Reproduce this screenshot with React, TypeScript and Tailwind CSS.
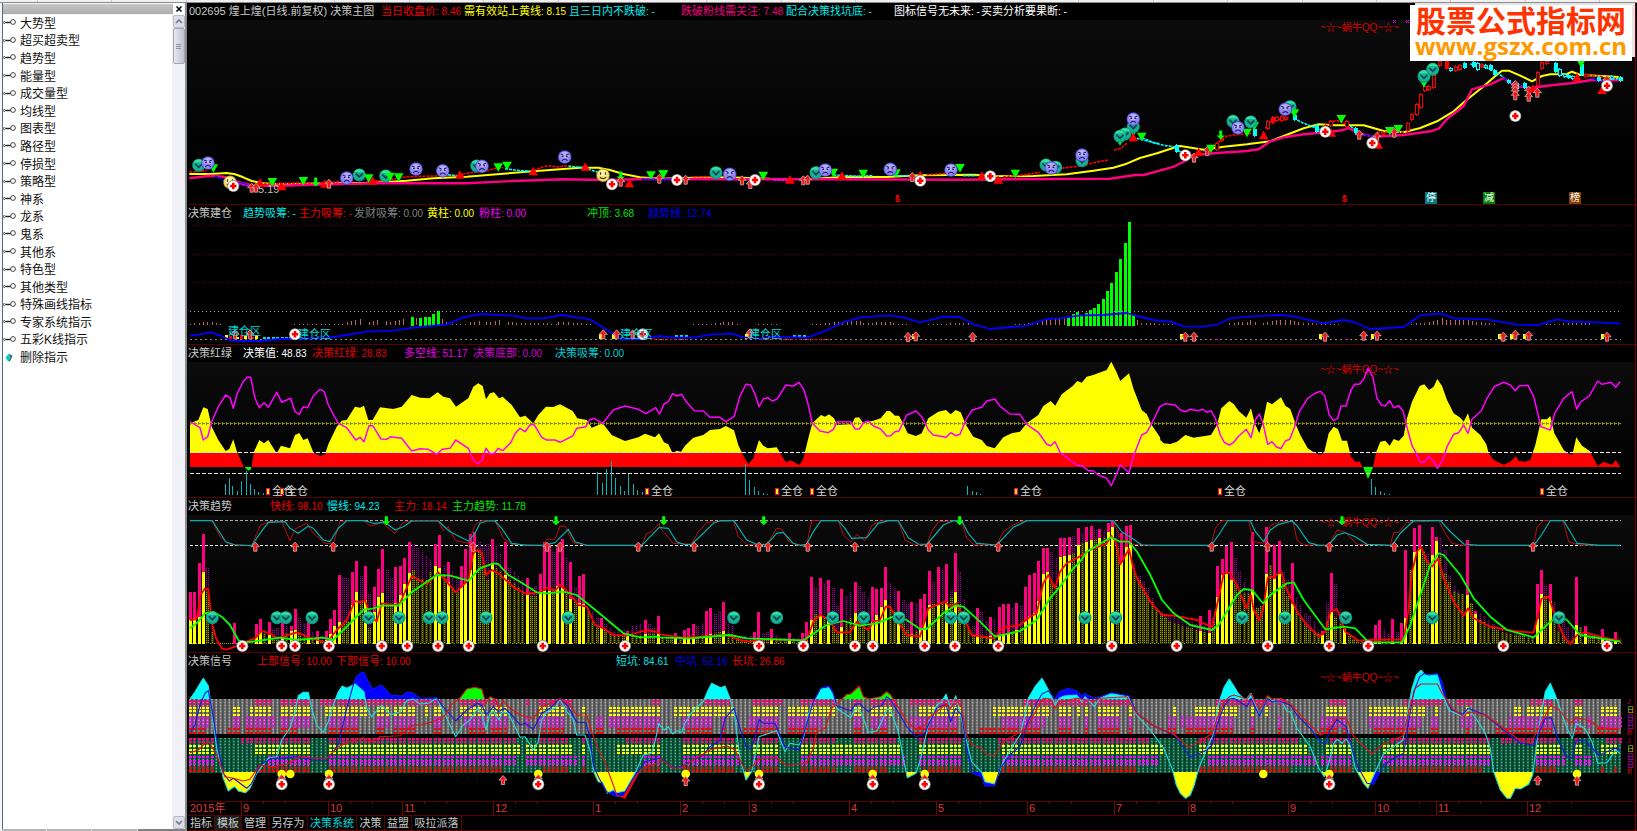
import { ReactNode } from "react";

// Curves are stored as three windows, each at three units to the pixel
type Trace = [string, string, string];

const WINDOW_X = [180, 660, 1137];

const TOP = { price: 0, build: 205, band: 205, trend: 495, signal: 495 };

const points = (trace: Trace, oy: number): [number, number][] => {
  const result: [number, number][] = [];
  trace.forEach((part, i) => {
    part.split(" ").forEach((pair) => {
      if (!pair) return;
      const [x, y] = pair.split(",").map(Number);
      const px = WINDOW_X[i] + x / 3;
      const last = result[result.length - 1];
      if (last && px <= last[0]) return;
      result.push([px, oy + y / 3]);
    });
  });
  return result;
};

const linePath = (pts: [number, number][]) =>
  "M" + pts.map(([x, y]) => `${x.toFixed(1)},${y.toFixed(1)}`).join("L");

const areaPath = (pts: [number, number][], base: number) =>
  `${linePath(pts)}L${pts[pts.length - 1][0]},${base}L${pts[0][0]},${base}Z`;

const valueAt = (pts: [number, number][], x: number) => {
  const i = pts.findIndex((p) => p[0] >= x);
  if (i <= 0) return i === 0 ? pts[0][1] : pts[pts.length - 1][1];
  const [x0, y0] = pts[i - 1];
  const [x1, y1] = pts[i];
  return y0 + ((y1 - y0) * (x - x0)) / (x1 - x0);
};

const PITCH = 4.372;
const FIRST = 190;
const COLUMNS = Array.from({ length: 328 }, (_, i) => FIRST + i * PITCH);

/* ---------------------------------------------------------------- price */

const priceYellow: Trace = [
  "28,522 90,522 140,519 165,523 190,532 215,543 250,550 300,553 440,550 580,548 680,542 760,535 860,530 960,522 1060,514 1150,507 1200,503 1255,503 1290,510 1330,522 1380,532 1440,536",
  "100,533 200,532 330,536 450,537 560,530 680,531 780,526 940,524 1000,529 1120,528 1220,523 1300,512 1360,503 1400,491 1440,474",
  "0,478 60,460 110,443 130,438 200,449 260,440 330,433 400,424 440,408 500,385 545,373 590,376 680,376 740,393 800,397 850,384 900,364 950,334 985,303 1040,259 1075,228 1095,212 1115,212 1150,227 1185,244 1215,228 1240,223 1290,222 1305,215 1330,225 1380,227 1445,231",
];
const pricePink: Trace = [
  "28,535 90,527 130,530 170,545 220,557 300,557 440,553 600,550 860,550 1000,543 1150,538 1280,540 1400,537",
  "0,537 200,538 500,538 900,539 1200,537 1350,536 1400,529 1425,525",
  "0,525 20,525 60,514 110,500 150,480 165,466 240,459 330,453 365,448 400,424 440,412 500,403 570,397 620,390 635,384 665,400 710,410 800,405 880,394 905,386 930,357 980,318 1005,268 1060,253 1100,234 1130,255 1180,265 1230,257 1300,250 1370,239 1400,242 1450,240",
];

// [window, colour, points]
const priceRuns: [number, string, string][] = [
  [0, "#f00", "28,516 80,512"],
  [0, "#00f", "105,528 130,540 160,550 185,548 210,557"],
  [0, "#f0f", "150,545 170,550 215,560"],
  [0, "#f00", "240,553 350,549 440,548 480,545"],
  [0, "#f00", "560,545 620,540 680,530 760,528 830,526 870,518 920,512 950,504 970,503"],
  [0, "#0ff", "780,522 830,527"],
  [0, "#0ff", "975,506 1010,511 1050,514"],
  [0, "#f00", "1060,512 1090,500 1110,497 1130,501 1165,497"],
  [0, "#0ff", "1165,498 1210,503 1240,512 1262,520"],
  [0, "#00f", "1385,538 1440,540 1490,537"],
  [1, "#f00", "100,530 160,530"],
  [1, "#f0f", "340,539 390,543"],
  [1, "#0ff", "520,525 590,529 640,527"],
  [1, "#0ff", "700,527 760,527"],
  [1, "#f00", "800,524 870,520"],
  [1, "#0ff", "910,527 950,527"],
  [1, "#f00", "1030,530 1090,525 1140,517"],
  [1, "#f00", "1205,505 1240,500 1270,497 1300,488 1345,480"],
  [1, "#f00", "1362,450 1380,446 1395,435 1402,426"],
  [1, "#0ff", "1430,415 1470,425 1500,432"],
  [2, "#0ff", "15,413 50,428 80,436 110,440 135,460"],
  [2, "#f00", "225,440 250,422 270,408 310,403 350,400"],
  [2, "#f00", "385,385 400,366 430,358 455,352"],
  [2, "#0ff", "470,355 500,370 540,385 560,392"],
  [2, "#f00", "575,365 600,362 630,372"],
  [2, "#0ff", "630,372 665,395"],
  [2, "#00f", "650,392 680,404 715,410"],
  [2, "#f00", "720,397 800,397"],
  [2, "#0ff", "1000,192 1040,200 1075,215 1100,232"],
  [2, "#00f", "1100,235 1140,255 1170,262"],
  [2, "#0ff", "1250,205 1265,218 1290,232 1325,236"],
  [2, "#f00", "1340,225 1400,230"],
  [2, "#00f", "1360,234 1400,245"],
  [2, "#0ff", "1400,238 1450,236"],
];

// x, top, bottom, kind: r hollow red, R solid red, c solid cyan, h hollow cyan
const candles =
  "118 436 458 c|238 430 450 r|252 418 425 r|352 388 408 c|390 362 387 r|405 352 370 R|418 352 365 r|432 348 362 r|445 350 360 r|470 345 360 c|537 375 395 c|565 375 385 r|580 362 378 r|628 362 380 r|655 385 400 c|735 395 405 r|810 370 395 r|823 343 360 r|837 312 345 r|850 283 325 r|862 258 272 r|874 258 270 r|887 225 265 r|905 183 198 r|927 184 208 R|940 205 215 h|953 198 212 r|966 195 210 r|980 188 202 c|1007 186 200 c|1020 190 212 h|1032 192 202 r|1045 196 204 h|1058 196 212 c|1072 210 226 c|1112 240 250 c|1137 250 268 c|1160 250 265 c|1200 215 258 r|1213 185 205 r|1227 183 192 r|1253 188 215 c|1266 208 230 h|1280 222 232 h|1293 226 234 c|1306 228 238 h|1332 192 225 c|1345 222 232 r|1383 232 245 c|1422 228 238 h|1448 230 242 c".split(
    "|"
  );

const priceMarks = [
  "V 56 496|G 100 505|S 84 489|Y 150 547|C 160 558|T 240 548|U 215 563|U 228 563|G 277 546|T 305 559|G 370 543|A 407 546|T 435 551|U 447 551|S 500 534|V 538 525|G 566 535|T 578 542|V 617 528|G 630 530|G 656 532|S 708 507|S 788 512|T 840 524|V 890 498|S 906 499|G 955 502|G 981 497|T 1060 514|S 1154 471|T 1216 500|Y 1269 526|C 1296 553|A 1322 528|U 1322 545|T 1348 550|G 1413 526|U 1438 536|G 1450 523",
  "G 10 523|C 51 540|U 77 539|V 168 518|S 209 523|U 246 541|U 271 552|C 285 540|G 310 527|T 390 539|U 430 541|U 443 539|V 468 518|G 520 518|S 496 510|T 546 527|G 610 521|G 708 520|S 691 508|U 757 531|T 781 526|C 781 542|G 900 504|S 873 510|T 965 527|C 991 529|T 1015 539|G 1066 521|V 1158 495|V 1187 502|S 1174 504|V 1266 482|S 1266 465|G 1420 396|V 1420 380|S 1420 357|V 1395 402|G 1380 424|V 1380 409|G 1445 410|T 1420 412",
  "C 145 466|U 171 473|T 185 456|U 211 453|G 222 446|A 251 405|G 352 378|V 288 364|V 341 366|G 330 398|S 303 383|T 380 406|V 459 320|G 472 340|S 445 328|T 583 398|C 565 395|G 613 357|U 667 404|U 720 410|T 724 434|C 706 429|G 758 393|G 784 387|U 772 398|G 861 250|V 861 229|V 887 208|U 1135 255|U 1135 264|U 1135 273|U 1135 286|U 1175 272|U 1175 290|T 1188 266|U 1201 278|C 1135 348|T 1320 232|G 1332 190|T 1395 270|U 1410 240|C 1410 257",
];

/* ---------------------------------------------------------------- build */

const buildLine: Trace = [
  "30,392 60,388 92,382 120,391 145,403 170,408 240,408 300,402 440,399 500,390 560,380 640,377 700,368 800,358 850,337 900,327 1000,332 1040,340 1090,340 1145,330 1230,343 1270,368 1300,386 1325,403 1380,403 1440,393",
  "0,393 40,398 100,398 150,389 215,386 250,397 300,401 340,396 440,398 490,380 550,352 600,337 690,331 730,337 780,352 850,335 900,336 940,358 990,372 1100,362 1160,342 1200,340 1260,331 1330,330 1400,324 1430,333",
  "50,345 100,350 140,364 200,365 240,359 280,340 330,335 430,330 470,334 560,355 620,345 650,351 700,372 800,366 850,331 910,325 950,340 1050,343 1140,359 1200,361 1260,343 1300,350 1380,352 1450,356",
];

// window, from, to, height at each end
const buildTicks: number[][] = [
  [0, 30, 70, 4, 8], [0, 82, 125, 10, 3], [0, 343, 490, 3, 4], [0, 500, 552, 8, 18],
  [0, 566, 605, 9, 16], [0, 618, 640, 12, 8], [0, 644, 683, 12, 18], [0, 708, 708, 20, 20],
  [0, 785, 800, 18, 10], [0, 815, 865, 4, 4], [0, 870, 905, 8, 12], [0, 918, 970, 8, 15],
  [0, 983, 1130, 8, 4], [0, 1135, 1160, 10, 10], [0, 1165, 1240, 8, 3],
  [1, 100, 180, 3, 5], [1, 190, 225, 8, 8], [1, 232, 245, 3, 3], [1, 295, 350, 3, 3],
  [1, 455, 490, 3, 3], [1, 495, 600, 6, 12], [1, 610, 690, 6, 9], [1, 700, 745, 5, 3],
  [1, 805, 930, 4, 5], [1, 1065, 1140, 3, 6], [1, 1145, 1215, 12, 20], [1, 1431, 1431, 16, 16],
  [2, 13, 110, 6, 3], [2, 277, 330, 5, 10], [2, 340, 342, 15, 15], [2, 353, 366, 8, 5],
  [2, 378, 432, 7, 16], [2, 445, 500, 16, 6], [2, 512, 610, 5, 3], [2, 810, 870, 3, 6],
  [2, 875, 915, 8, 20], [2, 927, 995, 14, 16], [2, 1005, 1080, 12, 3], [2, 1200, 1365, 4, 5],
];

const greenBars = [
  "695,336 721,338 734,337 747,335 760,328 773,318",
  "1225,338 1238,328 1251,320 1264,330 1277,325 1289,315 1301,309 1315,296 1328,281 1341,259 1354,233 1367,201 1381,162 1394,114 1407,51 1420,330",
];

const buildMarks = [
  "U 165 388|U 210 388|C 345 388|U 1270 388|U 1310 388|U 1358 388|C 1388 388",
  "U 270 385|U 744 396|U 767 394|U 938 396",
  "U 145 395|U 171 395|U 564 395|U 680 392|U 720 392|U 1099 395|U 1135 389|U 1175 392|U 1410 395",
];

/* ----------------------------------------------------------------- band */

const bandArea: Trace = [
  "30,655 55,645 70,607 83,612 95,665 115,705 137,738 148,732 160,703 170,738 190,782 205,797 213,793 222,740 238,705 252,715 265,705 290,745 303,722 330,730 345,690 358,684 370,705 383,700 400,742 420,753 435,748 445,718 470,665 485,647 500,645 525,605 540,608 552,602 565,645 578,645 600,607 640,612 665,605 695,570 720,578 748,580 773,562 790,575 810,580 828,605 865,580 880,545 895,535 908,543 918,583 930,565 942,562 957,580 968,575 995,600 1020,637 1036,632 1060,655 1075,630 1098,605 1120,606 1140,598 1178,618 1192,640 1220,645 1235,668 1268,655 1295,690 1335,708 1375,697 1395,686 1425,697 1437,685",
  "0,690 12,712 25,718 38,745 50,737 63,740 75,722 100,698 130,690 150,675 180,672 197,663 222,676 235,720 250,752 265,777 280,760 297,705 310,722 323,730 350,727 365,752 378,772 392,766 418,780 430,762 445,700 457,655 483,630 495,635 507,628 522,640 532,660 575,657 585,638 597,637 610,655 623,650 640,647 662,640 680,618 690,618 705,632 717,632 730,657 743,685 768,693 785,685 805,640 835,620 858,615 872,628 887,615 902,622 918,660 940,695 965,705 980,723 1004,730 1030,697 1055,685 1080,680 1100,655 1135,630 1150,603 1172,588 1186,602 1205,568 1238,543 1252,528 1265,533 1280,515 1300,510 1340,495 1354,470 1368,498 1381,528 1407,505 1420,550 1445,615 1460,627 1475,660 1500,697",
  "70,705 80,715 100,717 120,710 145,690 170,698 222,690 240,660 253,610 277,588 290,597 305,618 328,638 342,610 353,655 367,685 378,650 390,590 405,598 432,577 445,602 460,612 475,655 490,690 512,730 530,742 550,750 562,740 575,685 590,665 603,673 615,707 630,707 642,755 655,770 668,770 680,790 693,822 707,790 718,740 730,710 745,707 758,722 770,702 785,708 800,692 810,640 825,590 848,543 862,538 876,555 890,545 901,522 915,543 930,585 950,625 970,638 980,650 993,625 1005,668 1030,690 1048,718 1055,745 1070,765 1100,779 1120,770 1137,753 1145,768 1165,770 1180,765 1195,720 1213,643 1230,643 1240,633 1252,685 1280,735 1295,747 1306,750 1318,697 1335,722 1358,738 1382,783 1400,770 1425,780 1436,765 1450,785",
];
const bandLine: Trace = [
  "30,650 60,668 70,705 83,695 95,650 115,605 137,570 150,578 160,610 172,565 190,530 202,516 212,517 225,580 238,608 252,593 265,607 290,562 305,592 332,580 345,620 358,628 370,605 383,608 400,572 420,553 433,560 445,600 475,655 500,668 527,705 540,697 552,710 567,662 578,662 603,702 620,703 632,695 665,700 695,738 720,731 745,733 770,748 787,733 810,730 827,705 865,730 880,765 893,777 907,765 918,730 930,747 943,745 955,730 968,737 993,712 1006,685 1020,670 1035,680 1050,660 1062,658 1085,697 1100,705 1125,705 1140,712 1178,693 1190,670 1218,665 1228,645 1242,640 1268,655 1300,615 1335,603 1375,613 1398,626 1427,608 1438,627",
  "0,625 12,597 25,590 38,566 50,573 65,568 80,592 103,617 130,618 150,637 180,637 197,650 222,635 240,573 258,538 272,540 285,567 297,605 310,582 323,578 337,588 350,583 378,540 400,543 417,532 432,555 445,600 457,655 480,678 505,683 520,673 532,650 572,650 585,672 598,672 612,652 625,648 640,663 662,672 680,693 692,692 705,680 717,678 740,630 768,618 785,635 805,675 820,690 858,697 872,683 887,692 900,688 920,640 937,615 965,607 980,588 1005,582 1018,602 1050,627 1080,628 1100,658 1135,682 1160,718 1172,722 1185,710 1200,742 1250,780 1265,782 1285,797 1300,797 1315,810 1340,820 1354,842 1381,780 1407,803 1420,755 1445,690 1460,682 1475,655 1500,605",
  "85,596 115,600 130,615 145,620 160,613 183,617 197,613 210,622 222,617 235,640 250,690 262,712 277,720 290,712 303,695 328,673 342,698 355,645 367,627 378,655 392,718 405,710 418,725 432,731 445,708 458,703 473,665 487,620 512,580 530,567 550,559 563,572 577,630 590,647 602,640 612,603 627,603 642,555 653,538 668,537 680,522 693,490 707,515 720,580 733,600 745,603 758,587 770,608 785,602 798,618 812,675 825,722 838,745 850,772 862,772 875,755 888,765 901,790 917,765 930,725 950,688 965,683 980,660 993,685 1005,643 1033,617 1050,580 1072,545 1100,532 1120,540 1135,557 1147,542 1173,541 1190,575 1212,665 1240,675 1253,625 1280,580 1305,560 1319,612 1332,590 1357,573 1382,528 1395,538 1422,532 1436,547 1449,530",
];
const spikes = [
  "137,838 150,818 160,843 173,858 186,828 200,798 212,836 225,852 238,861 252,864 1255,800 1269,835 1282,793 1295,768 1308,820 1322,843 1335,857 1348,806 1361,838 1375,855 1388,862",
  "258,778 271,825 285,846 298,858 311,864 324,867 925,843 938,857 951,862 964,866",
  "705,822 718,846 732,857 745,863 758,867",
];
const fullMarks: [number, number][] = [
  [0, 265], [0, 305], [0, 1400], [1, 350], [1, 456], [1, 1067], [2, 250], [2, 1214],
];

/* ---------------------------------------------------------------- trend */

const volYellow: Trace = [
  "30,375 57,365 70,225 83,290 90,370 97,420 110,447 180,447 220,435 240,410 265,420 290,432 340,403 370,420 400,432 440,435 470,380 500,385 527,287 540,320 552,295 566,405 592,310 605,287 618,325 650,325 683,240 695,218 710,250 740,255 760,215 773,210 787,240 830,290 865,255 878,165 893,165 905,180 918,280 930,200 943,215 970,235 1035,295 1062,305 1085,287 1110,290 1140,267 1165,310 1215,330 1240,385 1270,400 1300,420 1350,425 1390,418 1430,412",
  "0,425 100,428 195,408 240,435 440,435 457,352 480,365 505,375 530,412 585,352 625,400 677,312 690,335 720,370 750,420 790,395 805,330 860,322 885,290 900,330 935,420 1010,425 1080,400 1105,365 1130,350 1145,240 1160,230 1185,290 1198,187 1240,175 1252,150 1290,137 1341,122 1354,78 1367,140 1381,210 1407,122 1420,220 1431,245",
  "30,300 60,345 100,380 150,397 220,415 237,335 250,245 263,230 277,250 330,305 342,258 355,340 378,330 392,155 405,260 432,228 445,290 470,340 520,405 560,420 577,345 600,370 640,430 700,443 800,440 812,275 825,175 852,155 875,210 901,125 915,215 950,290 993,300 1020,370 1090,410 1190,430 1203,345 1213,290 1240,320 1265,410 1300,447 1320,380 1345,420 1400,430 1450,440",
];
const volPurple: Trace = [
  "30,447 75,447 83,200 97,390 110,447 230,447 250,402 300,400 360,365 380,400 440,430 470,240 500,250 540,240 566,300 618,218 632,250 695,145 740,185 800,215 830,240 893,135 905,155 943,140 985,215 1060,285 1115,170 1165,190 1190,300 1250,365 1300,410 1400,380 1435,410",
  "0,430 60,430 120,388 180,345 210,360 225,430 320,412 360,425 430,430 445,430 468,258 493,265 519,278 530,330 570,292 600,272 625,310 665,280 690,262 705,285 735,325 765,325 795,300 820,262 845,220 870,290 898,228 912,315 940,400 965,345 980,385 1070,330 1090,330 1170,165 1190,195 1225,130 1300,100 1320,105 1367,100 1420,190 1431,235",
  "30,275 60,345 100,360 170,385 220,395 290,180 315,250 355,330 370,350 405,182 450,250 500,350 525,370 545,410 590,250 602,285 615,410 640,443 700,443 740,405 765,420 800,400 870,175 915,120 940,260 1000,330 1060,380 1100,410 1190,420 1225,270 1255,330 1290,395 1325,400 1380,425 1450,430",
];
const volBright = [
  "30,292 43,290 57,203 70,118 160,385 226,388 239,372 265,380 305,372 331,392 344,342 383,370 407,408 433,408 447,372 460,345 473,240 513,232 526,198 552,212 579,277 592,222 605,162 644,217 657,213 670,190 683,142 760,148 773,120 800,200 839,213 852,163 866,118 879,110 930,132 969,140 1035,248 1074,238 1087,140 1100,150 1127,160 1140,132 1176,200 1203,242 1216,238 1268,370 1348,408 1388,375 1437,362 1490,415",
  "77,405 90,398 103,387 142,347 155,340 195,322 284,412 297,350 337,402 390,415 430,415 443,380 457,245 482,250 505,256 545,282 585,260 638,275 650,283 664,278 677,215 717,287 757,322 780,312 793,298 806,228 833,217 859,208 885,175 951,340 991,365 1015,337 1027,327 1040,327 1067,325 1093,277 1106,240 1120,235 1132,198 1146,160 1160,160 1198,130 1212,130 1225,125 1251,100 1275,95 1288,92 1315,103 1341,85 1354,78 1381,115 1394,93 1407,90",
  "183,363 210,345 237,213 250,192 263,152 276,142 342,110 379,177 392,95 418,150 431,137 458,205 550,408 577,235 627,400 718,390 731,375 771,372 798,385 811,165 825,123 838,98 851,90 888,95 901,125 993,135 1019,348 1201,268 1214,225 1240,268 1319,245 1345,392 1396,402 1436,410",
];
const trendRed: Trace = [
  "30,375 50,372 62,300 75,280 85,283 95,380 108,430 125,460 140,464 165,455 190,443 225,430 245,408 270,415 290,430 350,412 400,432 440,443 470,405 500,375 525,318 540,322 555,315 570,360 590,380 605,325 640,330 660,325 695,243 740,268 775,232 800,260 827,292 865,255 880,175 893,165 906,175 918,240 935,225 955,235 1005,280 1040,297 1080,292 1105,277 1125,288 1140,270 1170,297 1195,330 1220,335 1245,390 1270,400 1300,420 1340,422 1400,405 1437,412",
  "0,418 70,428 200,420 240,435 270,440 310,432 440,437 460,380 480,360 505,372 530,412 570,412 590,380 625,405 640,380 660,375 677,335 690,335 705,365 740,420 780,425 805,340 855,320 870,335 890,325 910,365 935,420 1000,430 1030,398 1080,390 1110,365 1130,355 1150,265 1165,240 1185,280 1200,230 1220,205 1250,190 1290,165 1340,145 1354,122 1367,140 1381,208 1407,162 1420,220 1431,250",
  "40,320 75,360 110,362 180,375 225,397 240,330 260,237 277,232 300,270 328,340 342,300 350,345 367,375 378,345 392,248 410,245 432,230 450,285 480,350 510,390 545,425 565,410 580,350 600,342 625,410 665,437 690,435 800,433 815,340 825,230 840,170 852,155 870,200 885,215 903,190 920,250 950,320 980,362 993,340 1010,370 1060,395 1130,408 1190,413 1203,360 1213,312 1235,305 1250,350 1280,425 1300,447 1320,420 1345,412 1400,428 1450,437",
];
const trendGreen: Trace = [
  "30,400 50,385 75,355 100,350 125,365 150,390 175,435 190,443 240,437 300,428 350,435 430,428 460,435 500,395 550,345 580,340 605,332 655,332 695,292 770,240 810,242 865,257 900,220 940,205 955,207 985,240 1020,260 1070,292 1100,295 1150,290 1190,300 1240,340 1330,415 1380,427 1430,425",
  "0,427 90,430 210,420 260,430 430,436 500,390 550,378 600,392 650,385 700,365 740,375 780,402 800,402 850,355 885,332 910,335 960,380 1005,425 1080,408 1130,375 1170,310 1200,275 1240,220 1260,200 1280,170 1354,127 1380,140 1407,140 1431,170",
  "40,240 75,315 110,355 160,390 225,405 245,390 300,300 320,282 345,285 378,325 400,300 450,265 470,262 500,315 565,403 620,395 655,400 695,442 795,442 820,390 850,300 880,210 905,175 920,180 970,240 1010,310 1060,365 1110,405 1190,427 1240,380 1265,365 1290,375 1330,420 1450,440",
];
const oscCyan: Trace = [
  "30,77 97,77 110,98 137,140 165,150 215,152 240,115 265,82 315,80 330,100 355,115 385,93 400,100 430,135 450,140 475,100 500,77 555,77 580,85 615,82 645,105 670,95 695,78 775,78 810,110 865,138 885,115 900,85 920,78 945,78 965,100 995,145 1040,151 1090,151 1125,143 1165,103 1185,140 1220,151 1385,151 1438,97",
  "0,98 25,100 50,140 75,149 95,148 130,115 160,85 180,77 222,77 235,97 260,135 290,148 320,148 350,115 370,112 400,145 420,151 440,148 460,110 483,77 535,77 555,100 575,130 620,128 655,85 685,77 715,77 745,128 775,147 800,148 825,120 850,90 880,77 905,77 925,115 950,145 1010,150 1060,97 1100,77 1360,77 1385,110 1420,132 1445,150 1500,151",
  "222,151 245,120 272,77 340,77 355,110 380,140 400,105 425,88 465,78 480,92 515,143 545,151 575,150 600,120 625,113 655,125 690,148 765,151 790,115 830,77 910,77 935,105 980,147 1025,151 1190,151 1210,125 1240,77 1280,77 1320,145 1390,151 1449,151",
];
const oscRed: Trace = [
  "30,77 97,77 120,125 145,147 215,152 240,92 265,80 305,78 330,137 345,102 380,85 400,115 435,145 460,145 480,80 500,77 550,77 570,92 590,88 605,80 620,95 645,115 670,82 700,77 775,77 790,107 805,95 827,137 865,145 885,90 905,77 945,77 970,130 995,148 1090,151 1100,133 1125,133 1140,93 1155,93 1180,143 1220,151 1385,151 1400,115 1415,110 1438,85",
  "0,98 40,145 95,148 115,110 140,82 220,77 235,125 260,148 320,150 350,100 365,102 385,138 410,150 440,150 455,77 535,77 550,120 573,142 590,118 615,137 635,92 660,78 715,77 735,135 765,150 800,150 815,110 835,80 905,77 920,130 945,150 1010,150 1030,110 1060,90 1080,80 1100,77 1360,77 1380,128 1410,148 1500,151",
  "222,151 235,100 255,77 335,77 350,140 380,145 400,92 430,80 468,80 480,135 500,150 575,151 600,105 625,112 660,148 760,151 770,113 785,112 810,82 905,77 925,115 945,145 975,151 1190,151 1200,95 1220,77 1278,77 1295,140 1330,151 1449,151",
];

// kind and height, then the positions in each window
const trendMarks: [string, number, string[]][] = [
  ["A", 77, ["619 1128 1451", "311 899", "615"]],
  ["U", 155, ["226 345 460 879 1101 1140 1375", "103 297 324 443 585 807 1015", "224 392 577 772 1188"]],
  ["V", 368, ["97 291 317 396 566 657 747 786 918 1165", "221 350 518 611 717 872 911 1275 1367", "315 444 626 886 1266"]],
  ["C", 453, ["187 305 345 447 605 682 774 866 1088 1335", "297 430 585 638 794 885 1015 1355", "119 392 577 694 1099 1410"]],
];

/* --------------------------------------------------------------- signal */

const sigCyan: Trace = [
  "30,612 45,590 70,550 85,572 97,660 110,760 130,850 145,888 155,880 165,875 175,888 197,893 210,880 230,835 265,790 290,785 305,735 330,700 345,650 355,602 370,592 385,592 395,640 410,690 430,712 445,680 460,630 475,590 487,573 500,580 525,567 552,590 560,640 575,665 605,630 632,660 660,650 680,617 700,612 720,627 745,625 770,610 785,640 800,670 827,725 850,690 870,675 893,640 905,655 918,705 930,655 940,648 957,675 968,650 985,655 1005,695 1020,727 1035,725 1060,765 1075,740 1085,675 1100,650 1125,640 1140,612 1160,650 1178,670 1190,720 1215,720 1230,765 1243,835 1255,860 1268,863 1282,895 1300,885 1310,893 1335,888 1365,835 1390,780 1415,775 1425,740 1437,685",
  "0,690 12,705 25,695 38,717 50,707 65,712 75,685 100,645 130,620 142,590 155,565 182,578 195,573 210,610 222,650 240,790 258,855 275,830 297,725 350,707 375,770 390,745 417,750 430,730 445,660 460,620 470,605 482,582 495,580 507,578 520,600 530,640 572,668 585,643 598,643 610,670 625,712 650,708 665,680 680,642 692,645 715,710 730,790 742,848 768,835 782,790 805,690 830,630 845,620 858,597 872,640 887,602 900,650 915,720 935,800 965,832 975,860 1004,867 1030,800 1060,750 1080,720 1095,660 1105,610 1125,575 1146,550 1160,575 1172,598 1185,630 1198,610 1212,603 1250,600 1265,620 1275,605 1303,635 1320,610 1354,595 1405,605 1430,660",
  "40,705 80,760 105,820 118,870 130,895 146,910 160,900 172,870 185,820 210,760 228,720 240,650 250,610 262,575 277,552 292,575 305,597 325,615 342,595 367,660 392,612 418,622 435,620 450,650 460,650 480,700 520,755 545,820 562,845 575,805 590,745 600,733 615,745 627,732 640,750 655,820 680,865 693,880 715,830 740,775 770,755 798,735 810,660 825,580 838,540 852,525 865,540 888,540 901,540 915,590 935,645 978,665 993,640 1020,675 1045,715 1060,760 1070,830 1090,885 1110,910 1120,910 1135,880 1150,882 1175,868 1187,840 1205,700 1225,590 1240,565 1255,600 1290,700 1306,730 1318,685 1345,702 1365,740 1382,805 1410,803 1436,765 1449,775",
];
const sigBlue: Trace = [
  "30,712 45,690 60,630 75,595 85,587 97,650 115,760 130,835 148,858 160,850 200,880 215,865 240,810 275,790 300,790 350,785 400,795 440,795 475,750 500,640 520,570 527,548 540,535 552,532 565,560 578,583 605,570 632,600 665,603 683,590 700,595 720,610 770,608 785,630 827,678 860,645 893,625 907,632 918,660 940,635 955,650 975,640 1000,665 1020,690 1035,685 1060,703 1085,655 1110,640 1140,610 1165,635 1190,682 1218,683 1230,730 1240,810 1255,845 1280,890 1310,905 1330,900 1360,850 1395,800 1437,790",
  "0,790 40,818 65,815 100,795 130,780 150,755 180,735 195,670 222,640 240,700 258,755 272,762 285,730 297,673 310,685 345,685 375,755 417,765 445,670 460,620 482,580 507,573 520,595 530,632 572,648 585,630 598,625 625,650 640,637 665,632 680,605 692,615 720,660 740,695 768,725 795,715 805,690 830,640 858,628 872,680 887,640 905,660 920,760 937,835 965,845 975,873 1004,873 1020,820 1060,770 1080,755 1100,690 1132,620 1146,597 1165,587 1185,612 1198,590 1225,580 1250,588 1265,603 1275,595 1300,610 1320,605 1354,593 1407,602 1430,655",
  "50,693 100,715 115,723 160,787 210,765 225,750 240,690 260,635 277,612 290,610 330,635 342,610 367,662 392,610 405,620 432,620 460,630 480,660 520,700 550,740 565,747 577,710 600,673 627,695 645,760 660,810 690,865 710,868 740,810 770,790 800,775 815,680 830,590 848,545 862,535 876,540 901,535 915,560 930,620 945,645 978,658 993,640 1045,660 1100,705 1150,745 1190,750 1205,715 1225,670 1243,668 1265,740 1290,785 1306,790 1318,735 1345,738 1385,780 1436,760 1449,768",
];
const sigRed: Trace = [
  "30,773 55,765 75,745 87,740 110,780 135,845 160,850 190,858 210,853 240,810 280,815 320,808 360,785 400,790 440,790 475,755 510,740 550,728 575,740 600,725 660,722 695,692 745,685 785,670 800,655 815,628 839,610 860,582 885,577 905,582 918,625 930,605 945,612 957,640 968,617 990,640 1020,660 1060,670 1087,635 1140,612 1165,625 1190,660 1220,660 1235,710 1255,765 1270,790 1300,870 1310,900 1335,910 1375,835 1395,815 1437,805",
  "0,792 40,820 65,818 100,795 150,765 200,752 225,765 250,815 265,828 297,790 350,788 380,812 440,803 460,760 470,710 495,700 515,640 548,610 560,598 572,597 598,573 610,605 625,612 662,605 680,590 692,600 717,640 740,680 768,702 795,690 805,670 858,628 872,640 887,612 905,640 920,720 937,750 965,760 980,780 1004,782 1030,740 1100,700 1132,640 1150,610 1172,612 1185,640 1200,620 1250,610 1300,618 1320,610 1400,605 1430,655",
  "50,693 110,717 155,757 225,717 240,670 260,625 277,605 290,600 330,612 342,597 367,645 392,602 405,612 432,610 460,627 500,670 550,720 570,710 600,668 630,673 650,725 705,777 740,747 798,722 815,650 835,580 852,567 901,567 915,595 945,640 980,665 993,650 1045,660 1100,700 1140,730 1180,745 1200,710 1240,632 1265,643 1300,685 1318,668 1360,678 1385,697 1449,703",
];

// rows lit in the heat bands: colour, row heights, column ranges per window
const dotRows: [string, number[], string[]][] = [
  ["#ff0080", [618, 628], ["30-83 225-270 300-385 420-775 839-905 930-945 1035 1074-1175 1425-1440", "140-210 284-360 430-515 585-600 638-700 755-900 1093-1180 1200-1290 1315-1410", "237-400 418-445 577-605 627 811-905 967-1000 1190-1240 1319-1330"]],
  ["#ffff00", [638, 648, 660], ["30-83 160-180 210-270 300-385 430-555 592-615 644-700 735-745 760-775 839-905 930-970 1074-1150 1216 1295-1440", "50-215 284-350 390-515 585-600 638-690 780-900 1003-1160 1198-1225 1251 1275 1315-1370 1407", "105 170-290 342 379-392 431 563-605 627 705-860 901 993 1137-1150 1175-1240 1319-1330 1396-1440"]],
  ["#ff00ff", [670, 680, 692], ["30-83 160-175 200-275 300-385 447-530 592-615 644-700 760-775 852-905 930-970 1035 1074-1150 1255-1270 1295-1440", "77-155 195 271-350 390-485 585-600 638-680 755-890 1027-1145 1198-1225 1275 1315-1365 1407", "92-105 131-275 342 392 418-431 550-605 627 705-840 888-901 980-1005 1120-1240 1319 1357 1390-1449"]],
  ["#ff0000", [703, 714], ["30-70 150-180 200-265 305-345 447-530 592-605 650-700 760-773 865-905 930-970 1074-1140 1255-1268 1320-1430", "90-155 195 258-350 390-470 585-600 650-677 767-885 964-1132 1198-1225 1275 1315-1365 1407", "92-105 145-275 342 392 418-431 550-600 627 718-835 888-901 993 1085-1240 1319-1330 1385-1440"]],
  ["#ff0080", [732, 742], ["30-97 187-385 447-1000 1074-1165 1216 1335-1440", "77-220 284-350 430-515 585-700 780-900 1015-1460", "0-30 183-480 577-630 771-1060 1095-1250 1319 1410-1449"]],
  ["#ffff00", [753, 764, 775], ["30-97 225-385 447-1010 1035-1175 1216 1320-1440", "77-225 284-350 430-718 780-900 1027-1460", "0-70 183-500 570-630 745-1060 1200-1270 1319-1330 1396-1440"]],
  ["#ff00ff", [787, 797, 807], ["30-97 265-385 447-1000 1035-1180 1216 1390-1440", "77-225 284-350 430-725 780-900 1027-1460", "0-55 210-525 550-630 745-1060 1200-1280 1319-1357"]],
  ["#ff0000", [818, 828], ["30-90 240-385 447-960 1087-1165 1216 1400-1440", "77-215 297-350 430-515 585-680 793-900 1027-1420", "183-450 577-630 771-1035 1200-1250 1396 1436"]],
];

const signalMarks = [
  "D 305 837|U 305 852|C 305 868|D 331 837|D 447 837|U 447 852|C 447 868|U 969 855|D 1075 837|U 1075 852|C 1075 868",
  "D 77 837|U 77 858|D 297 837|U 297 852|C 297 868|D 638 837|U 638 852|C 638 868|D 794 837|U 794 852|C 794 868",
  "D 379 837|D 577 837|U 577 852|C 577 868|U 1202 856|D 1320 837|U 1320 857",
];

const months: [number, string][] = [
  [241, "9"], [328, "10"], [402, "11"], [493, "12"], [593, "1"], [680, "2"], [749, "3"],
  [849, "4"], [936, "5"], [1027, "6"], [1114, "7"], [1188, "8"], [1288, "9"], [1375, "10"],
  [1436, "11"], [1527, "12"],
];

/* ---------------------------------------------------------------- marks */

const Mark = ({ kind, x, y }: { kind: string; x: number; y: number }) => {
  const shapes: Record<string, ReactNode> = {
    V: (
      <>
        <circle r="6.5" fill="#0c9c86" />
        <circle r="5.6" cy="-0.6" fill="#18b394" />
        <path d="M-5,-3A6,6 0 0 1 5,-3Z" fill="#35e0a0" />
        <path d="M-3.5,-1.5L0,2L3.5,-1.5" fill="none" stroke="#064a50" strokeWidth="1.8" />
      </>
    ),
    S: (
      <>
        <circle r="6.8" fill="#4a42c4" />
        <circle r="6" fill="#8d86f4" />
        <ellipse cy="-2" rx="4.5" ry="3" fill="#b4b0fc" />
        <path d="M-4,-3L-1.2,-1.8M4,-3L1.2,-1.8M-3,-0.5h1.8M3,-0.5h-1.8M-2.8,3.8Q0,0.8 2.8,3.8" fill="none" stroke="#1c1450" strokeWidth="1.1" />
      </>
    ),
    Y: (
      <>
        <circle r="6.8" fill="#a88a20" />
        <circle r="6" fill="#f4e070" />
        <ellipse cy="-2" rx="4.5" ry="3" fill="#fcf4b0" />
        <path d="M-2.5,-3v2.5M2.5,-3v2.5M-3.2,1.8Q0,5 3.2,1.8" fill="none" stroke="#403000" strokeWidth="1.2" />
      </>
    ),
    C: (
      <>
        <circle r="6" fill="#9a8c8c" />
        <circle r="5.2" fill="#fff" />
        <path d="M-3.2,0H3.2M0,-3.2V3.2" stroke="#f00" strokeWidth="2.6" />
      </>
    ),
    U: <path d="M0,-4.5L4,0H1.6V4.5H-1.6V0H-4Z" fill="#f01818" stroke="#d0a0a0" strokeWidth="0.9" />,
    A: <path d="M0,4.5L4.2,0.5H1.5V-4.5H-1.5V0.5H-4.2Z" fill="#0f0" />,
    T: <path d="M0,-4.5L4.8,4H-4.8Z" fill="#f00" />,
    G: <path d="M0,4.5L4.8,-4H-4.8Z" fill="#0f0" />,
    D: <circle r="4.3" fill="#ff0" />,
  };
  return <g transform={`translate(${x.toFixed(1)} ${y.toFixed(1)})`}>{shapes[kind]}</g>;
};

const Marks = ({ groups, oy }: { groups: string[]; oy: number }) => (
  <>
    {groups.map((group, i) =>
      group.split("|").map((entry, j) => {
        const [kind, x, y] = entry.split(" ");
        return (
          <Mark key={`${i}-${j}`} kind={kind} x={WINDOW_X[i] + Number(x) / 3} y={oy + Number(y) / 3} />
        );
      })
    )}
  </>
);

const Curve = ({ trace, oy, color, width = 1 }: { trace: Trace; oy: number; color: string; width?: number }) => (
  <path
    d={linePath(points(trace, oy))}
    fill="none"
    stroke={color}
    strokeWidth={width}
    strokeLinejoin="round"
  />
);

const Rule = ({ y, color, dash }: { y: number; color: string; dash: string }) => (
  <path d={`M190,${y}.5H1621`} stroke={color} strokeDasharray={dash} shapeRendering="crispEdges" />
);

const Snail = ({ y }: { y: number }) => (
  <text x="1320" y={y} fill="#d80000" fontSize="10">
    ~☆~蜗牛QQ~☆~
  </text>
);

/* --------------------------------------------------------------- panels */

type Reading = { label: string; value?: string; color: string; width: string };

const Readings = ({ items, first }: { items: Reading[]; first?: boolean }) => (
  <div
    className={`flex items-center bg-black text-[11px] leading-none whitespace-nowrap ${
      first ? "h-[17px] pl-px" : "h-[18px] border-t border-[#5a0000]"
    }`}
  >
    {items.map((item, index) => (
      <span key={index} className={`shrink-0 ${item.width} ${item.color}`}>
        {item.label}
        {item.value && <span className="text-[10px]">: {item.value}</span>}
      </span>
    ))}
  </div>
);

const PricePanel = () => (
  <svg viewBox="188 20 1449 184" className="block h-auto w-full" role="img" aria-label="决策主图">
    <defs>
      <linearGradient id="fade" x1="0" y1="0" x2="0" y2="1">
        <stop offset="0" stopColor="#0c0c0c" />
        <stop offset="1" stopColor="#000" />
      </linearGradient>
    </defs>
    <rect x="188" y="20" width="1447" height="150" fill="url(#fade)" />
    <Snail y={31} />
    <path d="M1393,20l3,3M1396,20l-3,3M1406,20l3,3M1409,20l-3,3" stroke="#e000e0" />
    <Curve trace={priceYellow} oy={TOP.price} color="#ff0" width={2} />
    <Curve trace={pricePink} oy={TOP.price} color="#ff0080" width={2.4} />
    {priceRuns.map(([win, color, run], i) => (
      <path
        key={i}
        d={linePath(run.split(" ").map((p) => {
          const [x, y] = p.split(",").map(Number);
          return [WINDOW_X[win] + x / 3, y / 3] as [number, number];
        }))}
        fill="none"
        stroke={color}
        strokeWidth="1.6"
        strokeDasharray="3 1"
      />
    ))}
    {candles.map((entry, i) => {
      const [x, top, bottom, kind] = entry.split(" ");
      const color = kind === "r" || kind === "R" ? "#f00" : "#0ff";
      const px = Math.round(1137 + Number(x) / 3);
      const py = Math.round(Number(top) / 3);
      const h = Math.max(2, Math.round((Number(bottom) - Number(top)) / 3));
      const hollow = kind === "r" || kind === "h";
      return (
        <g key={i} shapeRendering="crispEdges">
          <path d={`M${px}.5,${py - 1}V${py + h + 1}`} stroke={color} />
          <rect x={px - 1} y={py} width="4" height={h} fill={color} />
          {hollow && h > 2 && <rect x={px} y={py + 1} width="2" height={h - 2} fill="#000" />}
        </g>
      );
    })}
    <text x="258" y="193" fill="#c0c0c0" fontSize="11">5.19</text>
    <Marks groups={priceMarks} oy={TOP.price} />
    <text x="895" y="202" fill="#f00" fontSize="9" fontWeight="bold">$</text>
    <text x="1342" y="202" fill="#f00" fontSize="9" fontWeight="bold">$</text>
    <path d="M896,195.5h3M1343,195.5h3" stroke="#f00" />
    {[
      { x: 1425, text: "停", fill: "#007c80" },
      { x: 1483, text: "减", fill: "#008000" },
      { x: 1569, text: "榜", fill: "#804000" },
    ].map((badge) => (
      <g key={badge.text}>
        <rect x={badge.x} y="192" width="12" height="12" fill={badge.fill} />
        <text x={badge.x + 1} y="201" fill="#fff" fontSize="10">{badge.text}</text>
      </g>
    ))}
  </svg>
);

const BuildPanel = () => (
  <svg viewBox="188 222 1449 122" className="block h-auto w-full" role="img" aria-label="决策建仓">
    {[225, 254, 282].map((y) => (
      <path key={y} d={`M190,${y}.5H1635`} stroke="#5c0808" strokeDasharray="1 2" shapeRendering="crispEdges" />
    ))}
    <Rule y={311} color="#b8a0a0" dash="1 3" />
    <Rule y={339} color="#909090" dash="2 3" />
    {buildTicks.map(([win, from, to, h0, h1], i) => {
      const count = Math.floor((to - from) / 13.1) + 1;
      return Array.from({ length: count }, (_, k) => {
        const h = Math.max(1, Math.round((h0 + ((h1 - h0) * k) / Math.max(1, count - 1)) / 3));
        return (
          <rect key={`${i}-${k}`} x={Math.round(WINDOW_X[win] + (from + k * 13.1) / 3)} y={325 - h} width="1" height={h} fill="#c06464" />
        );
      });
    })}
    {greenBars.map((group, i) =>
      group.split(" ").map((bar) => {
        const [x, top] = bar.split(",").map(Number);
        const y = Math.round(205 + top / 3);
        return <rect key={bar} x={Math.round(WINDOW_X[i] + x / 3) - 1} y={y} width="3" height={326 - y} fill="#0f0" />;
      })
    )}
    {[225, 229, 236, 240, 244, 251, 255].map((x, i) => (
      <rect key={x} x={x} y={335 + (i % 3)} width="3" height={4 - (i % 3)} fill={i % 2 ? "#f00" : "#ff0"} />
    ))}
    {[263, 267, 272, 276, 281, 285, 289, 675, 680, 685, 793, 798, 803].map((x) => (
      <rect key={x} x={x} y={x > 400 ? 335 : 337} width="3" height="2" fill="#0dd" />
    ))}
    <path d="M650,339.5H690M755,339.5H830" stroke="#f00" strokeDasharray="2 2" />
    {[599, 612, 745, 912, 1180, 1319, 1371, 1498, 1510, 1523, 1601].map((x) => (
      <rect key={x} x={x} y="334" width="3" height="5" fill="#ff0" />
    ))}
    {[990, 1215, 1345].map((x) => (
      <rect key={x} x={x} y="339" width="3" height="1" fill="#f0f" />
    ))}
    <Curve trace={buildLine} oy={TOP.build} color="#00f" width={1.8} />
    <Marks groups={buildMarks} oy={TOP.build} />
    <g fill="#00d8d8" fontSize="11">
      <text x="228" y="335">建仓区</text>
      <text x="298" y="338">建仓区</text>
      <text x="620" y="338">建仓区</text>
      <text x="749" y="338">建仓区</text>
    </g>
  </svg>
);

const BandPanel = () => {
  const area = areaPath(points(bandArea, TOP.band), 467);
  return (
    <svg viewBox="188 362 1449 135" className="block h-auto w-full" role="img" aria-label="决策红绿">
      <defs>
        <clipPath id="band-high"><rect x="188" y="350" width="1449" height="103" /></clipPath>
        <clipPath id="band-mid"><rect x="188" y="453" width="1449" height="14" /></clipPath>
        <clipPath id="band-low"><rect x="188" y="467" width="1449" height="30" /></clipPath>
      </defs>
      <rect x="188" y="362" width="1447" height="110" fill="url(#fade)" />
      <path d={area} fill="#ff0" clipPath="url(#band-high)" />
      <path d={area} fill="#f00" clipPath="url(#band-mid)" />
      <path d={area} fill="#0f0" clipPath="url(#band-low)" />
      <path d="M190,423.5H1621" stroke="#8c8c00" strokeWidth="3" strokeDasharray="1 3" shapeRendering="crispEdges" />
      <Rule y={423} color="#8c8c00" dash="3 1" />
      <Rule y={452} color="#f0f0f0" dash="4 2" />
      <Rule y={473} color="#e0e0e0" dash="4 2" />
      {spikes.map((group, i) =>
        group.split(" ").map((spike) => {
          const [x, top] = spike.split(",").map(Number);
          const y = Math.round(205 + top / 3);
          return <rect key={spike} x={Math.round(WINDOW_X[i] + x / 3) - 1} y={y} width="1" height={495 - y} fill="#00b8b8" />;
        })
      )}
      <Snail y={373} />
      <Curve trace={bandLine} oy={TOP.band} color="#f0f" width={1.5} />
      {fullMarks.map(([win, x]) => {
        const px = Math.round(WINDOW_X[win] + x / 3);
        return (
          <g key={px}>
            <rect x={px - 1.5} y="488.5" width="3" height="6" fill="#ff0" stroke="#ff0060" />
            <text x={px + 4} y="495" fill="#d8d8d8" fontSize="11">全仓</text>
          </g>
        );
      })}
    </svg>
  );
};

const TrendPanel = () => {
  const yellow = points(volYellow, TOP.trend);
  const purple = points(volPurple, TOP.trend);
  const bright = new Map<number, number>();
  volBright.forEach((group, i) =>
    group.split(" ").forEach((bar) => {
      const [x, top] = bar.split(",").map(Number);
      bright.set(Math.round((WINDOW_X[i] + x / 3 - FIRST) / PITCH), TOP.trend + top / 3);
    })
  );
  return (
    <svg viewBox="188 515 1449 137" className="block h-auto w-full" role="img" aria-label="决策趋势">
      <defs>
        <pattern id="dim-yellow" width="2" height="2" patternUnits="userSpaceOnUse">
          <rect width="2" height="2" fill="#343400" />
          <rect width="1" height="1" fill="#989800" />
        </pattern>
        <pattern id="dim-purple" width="2" height="2" patternUnits="userSpaceOnUse">
          <rect width="2" height="2" fill="#240024" />
          <rect width="1" height="1" fill="#80107c" />
        </pattern>
      </defs>
      <rect x="188" y="515" width="1447" height="100" fill="url(#fade)" />
      <Rule y={520} color="#a8a8a8" dash="3 2" />
      <Rule y={545} color="#f0f0f0" dash="3 2" />
      <Rule y={643} color="#a0a000" dash="1 1" />
      <g shapeRendering="crispEdges">
        {COLUMNS.map((x, i) => {
          const top = bright.get(i);
          const px = Math.round(x) - 1;
          const yTop = Math.round(Math.min(644, valueAt(yellow, x)));
          const pTop = Math.round(top ?? valueAt(purple, x));
          return (
            <g key={i}>
              {pTop < 644 && (
                <rect x={px} y={pTop} width="3" height={644 - pTop} fill={top ? "#ff0080" : "url(#dim-purple)"} />
              )}
              <rect x={px} y={yTop} width="3" height={644 - yTop} fill={top ? "#ff0" : "url(#dim-yellow)"} />
            </g>
          );
        })}
      </g>
      <Snail y={526} />
      <Curve trace={oscRed} oy={TOP.trend} color="#b80c0c" />
      <Curve trace={oscCyan} oy={TOP.trend} color="#00b0b0" width={1.2} />
      <Curve trace={trendRed} oy={TOP.trend} color="#f00" width={1.8} />
      <Curve trace={trendGreen} oy={TOP.trend} color="#0f0" width={1.8} />
      {trendMarks.map(([kind, y, groups]) =>
        groups.map((group, i) =>
          group.split(" ").map((x) => (
            <Mark key={`${kind}${i}${x}`} kind={kind} x={WINDOW_X[i] + Number(x) / 3} y={TOP.trend + y / 3} />
          ))
        )
      )}
    </svg>
  );
};

const scaleLetters = [
  { text: "J", fill: "#c00060", y: 6 },
  { text: "日", fill: "#d8d800", y: 14 },
  { text: "日", fill: "#e000e0", y: 22 },
  { text: "日", fill: "#e000e0", y: 30 },
  { text: "R", fill: "#e00000", y: 37 },
];

const SignalPanel = () => {
  const high = (trace: Trace) => areaPath(points(trace, TOP.signal), 699);
  const low = (trace: Trace) => areaPath(points(trace, TOP.signal), 772);
  return (
    <svg viewBox="188 670 1449 131" className="block h-auto w-full" role="img" aria-label="决策信号">
      <defs>
        <clipPath id="sig-high"><rect x="188" y="660" width="1449" height="39" /></clipPath>
        <clipPath id="sig-low"><rect x="188" y="772" width="1449" height="40" /></clipPath>
        <pattern id="stripe-gray" x="189" y="0" width={PITCH} height="3" patternUnits="userSpaceOnUse">
          <rect width="5" height="3" fill="#5c5c5c" />
          <rect x="0.5" width="1.2" height="3" fill="#8c8c8c" />
          <rect x="0.5" width="1.2" height="1" fill="#bcbcbc" />
          <rect x="2.6" width="0.8" height="3" fill="#484848" />
        </pattern>
        <pattern id="stripe-green" x="189" y="0" width={PITCH} height="3" patternUnits="userSpaceOnUse">
          <rect width="5" height="3" fill="#005034" />
          <rect x="0.5" width="1.2" height="3" fill="#2c7458" />
          <rect x="0.5" width="1.2" height="1" fill="#80b8a0" />
          <rect x="2.6" width="0.8" height="3" fill="#003c28" />
        </pattern>
      </defs>
      <rect x="189" y="699" width="1432" height="35" fill="url(#stripe-gray)" />
      <rect x="189" y="738" width="1432" height="35" fill="url(#stripe-green)" />
      <g shapeRendering="crispEdges">
        {dotRows.map(([color, rows, groups], r) =>
          groups.map((group, win) =>
            group.split(" ").map((range) => {
              const [from, to = from] = range.split("-").map(Number);
              const x0 = WINDOW_X[win] + from / 3 - 2;
              const x1 = WINDOW_X[win] + to / 3 + 2;
              return COLUMNS.filter((x) => x >= x0 && x <= x1).map((x) =>
                rows.map((row) => (
                  <rect
                    key={`${r}-${x}-${row}`}
                    x={Math.round(x) - 1}
                    y={Math.round(TOP.signal + row / 3) - 1}
                    width="3"
                    height="2"
                    fill={color}
                  />
                ))
              );
            })
          )
        )}
      </g>
      <g clipPath="url(#sig-high)">
        <path d={high(sigBlue)} fill="#00f" />
        <path d={high(sigRed)} fill="#0f0" />
        <path d={high(sigCyan)} fill="#0ff" />
      </g>
      <g clipPath="url(#sig-low)">
        <path d={low(sigRed)} fill="#f00" />
        <path d={low(sigBlue)} fill="#00f" />
        <path d={low(sigCyan)} fill="#ff0" />
      </g>
      <Curve trace={sigCyan} oy={TOP.signal} color="#20dede" width={1.1} />
      <Curve trace={sigBlue} oy={TOP.signal} color="#1414e0" width={1.1} />
      <Curve trace={sigRed} oy={TOP.signal} color="#e01010" width={1.1} />
      <Snail y={681} />
      <Marks groups={signalMarks} oy={TOP.signal} />
      {[698, 737].map((top) =>
        scaleLetters.map((letter) => (
          <text key={`${top}-${letter.y}`} x="1627" y={top + letter.y} fill={letter.fill} fontSize="7">
            {letter.text}
          </text>
        ))
      )}
    </svg>
  );
};

const Axis = () => (
  <svg viewBox="188 801 1449 14" className="block h-auto w-full" role="img" aria-label="2015年">
    <path d="M188,801.5H1635" stroke="#5a0000" />
    <text x="190" y="812" fill="#d83838" fontSize="11">2015年</text>
    {months.map(([x, text]) => (
      <g key={x}>
        <path d={`M${x}.5,801V815M${x + 22}.5,801v3M${x + 44}.5,801v3`} stroke="#700808" />
        <text x={x + 2} y="812" fill="#d83838" fontSize="11">{text}</text>
      </g>
    ))}
  </svg>
);

/* --------------------------------------------------------------- layout */

const categories = [
  "大势型", "超买超卖型", "趋势型", "能量型", "成交量型", "均线型", "图表型", "路径型", "停损型", "策略型",
  "神系", "龙系", "鬼系", "其他系", "特色型", "其他类型", "特殊画线指标", "专家系统指示", "五彩K线指示", "删除指示",
];

const Sidebar = () => (
  <aside className="flex w-[187px] shrink-0 flex-col border-r-2 border-[#8c8c8c] bg-[#f4f5f8] pl-[2px]">
    <div className="flex h-[12px] items-center border-l border-[#5c6a80] pr-px">
      <div className="h-[10px] flex-1 bg-gradient-to-b from-[#c8c8c8] to-[#acacac]" />
      <button type="button" aria-label="关闭" className="flex h-[12px] w-[11px] items-center justify-center bg-white">
        <svg viewBox="0 0 6 6" className="size-[6px]">
          <path d="M0.5,0.5L5.5,5.5M5.5,0.5L0.5,5.5" stroke="#000" strokeWidth="1.5" />
        </svg>
      </button>
    </div>
    <div className="flex flex-1 border-l border-[#5c6a80] bg-white">
      <ul className="flex h-[352px] flex-1 flex-col">
        {categories.map((name, index) => (
          <li key={name} className="flex flex-1">
            <button type="button" className="flex w-full items-center text-left text-[12px] leading-none text-[#101010]">
              {index < categories.length - 1 ? (
                <svg viewBox="0 0 17 8" className="mb-[3px] h-[8px] w-[17px]">
                  <circle cx="10" cy="4" r="2.4" fill="none" stroke="#444" />
                  <circle cx="1.3" cy="4.5" r="1" fill="none" stroke="#444" strokeWidth="0.8" />
                  <path d="M2.5,4.5H7.5" stroke="#222" strokeWidth="1.4" />
                </svg>
              ) : (
                <svg viewBox="0 0 17 9" className="mb-[2px] h-[9px] w-[17px]">
                  <path d="M2.5,4.5L6,0.5L7.5,4.5L5,8.5Z" fill="#00d0d0" />
                  <path d="M6,0.5L9.5,3L7,8L5,8.5L7.5,4.5Z" fill="#206060" />
                </svg>
              )}
              {name}
            </button>
          </li>
        ))}
      </ul>
      <div className="flex w-[13px] flex-col items-center bg-[#f0f1f6]">
        <button type="button" aria-label="向上" className="flex h-[13px] w-[12px] items-center justify-center rounded-xs border border-[#b8bac8] bg-[#dcdde6]">
          <svg viewBox="0 0 8 5" className="h-[5px] w-[8px]">
            <path d="M1,4L4,1L7,4" fill="none" stroke="#70748c" strokeWidth="1.6" />
          </svg>
        </button>
        <div className="flex h-[36px] w-[12px] flex-col items-center justify-center gap-px rounded-xs border border-[#a4a6b8] bg-gradient-to-r from-[#e8e8f0] to-[#c0c2d0]">
          <span className="h-px w-[5px] bg-[#8c90a4]" />
          <span className="h-px w-[5px] bg-[#8c90a4]" />
          <span className="h-px w-[5px] bg-[#8c90a4]" />
        </div>
        <button type="button" aria-label="向下" className="mt-auto flex h-[13px] w-[12px] items-center justify-center rounded-xs border border-[#b8bac8] bg-[#dcdde6]">
          <svg viewBox="0 0 8 5" className="h-[5px] w-[8px]">
            <path d="M1,1L4,4L7,1" fill="none" stroke="#70748c" strokeWidth="1.6" />
          </svg>
        </button>
      </div>
    </div>
    <div className="flex h-[2px] gap-px bg-[#e8e8e8]">
      <span className="w-[44px] bg-[#b4b4b4]" />
      <span className="w-[44px] bg-[#b4b4b4]" />
      <span className="w-[45px] bg-[#b4b4b4]" />
      <span className="flex-1 bg-[#808080]" />
    </div>
  </aside>
);

const tabs = [
  { name: "指标", width: "w-[27px]" },
  { name: "模板", width: "w-[27px]", active: true },
  { name: "管理", width: "w-[27px]" },
  { name: "另存为", width: "w-[39px]" },
  { name: "决策系统", width: "w-[49px]", current: true },
  { name: "决策", width: "w-[28px]" },
  { name: "益盟", width: "w-[27px]" },
  { name: "吸拉派落", width: "w-[50px]" },
];

const Tabs = () => (
  <nav className="flex h-[16px] border-y border-[#5a0000] bg-black text-[11px] leading-none">
    {tabs.map((tab) => (
      <button
        key={tab.name}
        type="button"
        className={`shrink-0 border-r border-[#5a0000] whitespace-nowrap ${tab.width} ${
          tab.current ? "text-[#00d8d8]" : "text-[#c8c8c8]"
        } ${tab.active ? "bg-[#1c1c1c]" : ""}`}
      >
        {tab.name}
      </button>
    ))}
  </nav>
);

const App = () => {
  return (
    <div
      className="flex min-h-screen flex-col bg-black"
      style={{ fontFamily: '"Liberation Sans", "Noto Sans CJK SC", sans-serif' }}
    >
      <div className="flex h-[3px] justify-around border-b border-[#8c8c8c] bg-[#f0f0f0]">
        {Array.from({ length: 22 }, (_, i) => (
          <span key={i} className="w-px bg-[#c4c8d8]" />
        ))}
      </div>
      <div className="flex flex-1">
        <Sidebar />
        <main className="relative min-w-0 flex-1 border-l border-black">
          <Readings
            first
            items={[
              { label: "002695 煌上煌(日线.前复权) 决策主图", color: "text-[#c8c8c8]", width: "w-[192px]" },
              { label: "当日收盘价", value: "8.46", color: "text-[#f00000]", width: "w-[83px]" },
              { label: "需有效站上黄线", value: "8.15", color: "text-[#ffff00]", width: "w-[105px]" },
              { label: "且三日内不跌破", value: "-", color: "text-[#00e8e8]", width: "w-[112px]" },
              { label: "跌破粉线需关注", value: "7.48", color: "text-[#f00080]", width: "w-[105px]" },
              { label: "配合决策找坑底", value: "-", color: "text-[#00e8e8]", width: "w-[108px]" },
              { label: "图标信号无未来", value: "-", color: "text-[#ffffff]", width: "w-[87px]" },
              { label: "买卖分析要果断", value: "-", color: "text-[#ffffff]", width: "w-[90px]" },
            ]}
          />
          <PricePanel />
          <Readings
            items={[
              { label: "决策建仓", color: "text-[#c8c8c8]", width: "w-[55px]" },
              { label: "趋势吸筹", value: "-", color: "text-[#00e8e8]", width: "w-[56px]" },
              { label: "主力吸筹", value: "-", color: "text-[#f00000]", width: "w-[55px]" },
              { label: "发财吸筹", value: "0.00", color: "text-[#808080]", width: "w-[73px]" },
              { label: "黄柱", value: "0.00", color: "text-[#ffff00]", width: "w-[52px]" },
              { label: "粉柱", value: "0.00", color: "text-[#f000f0]", width: "w-[108px]" },
              { label: "冲顶", value: "3.68", color: "text-[#00e000]", width: "w-[61px]" },
              { label: "趋势线", value: "12.74", color: "text-[#0000e8]", width: "w-[80px]" },
            ]}
          />
          <BuildPanel />
          <Readings
            items={[
              { label: "决策红绿", color: "text-[#c8c8c8]", width: "w-[55px]" },
              { label: "决策值", value: "48.83", color: "text-[#ffffff]", width: "w-[69px]" },
              { label: "决策红绿", value: "28.83", color: "text-[#e00000]", width: "w-[92px]" },
              { label: "多空线", value: "51.17", color: "text-[#e800e8]", width: "w-[69px]" },
              { label: "决策底部", value: "0.00", color: "text-[#d800d8]", width: "w-[82px]" },
              { label: "决策吸筹", value: "0.00", color: "text-[#00d0d0]", width: "w-[80px]" },
            ]}
          />
          <BandPanel />
          <Readings
            items={[
              { label: "决策趋势", color: "text-[#c8c8c8]", width: "w-[82px]" },
              { label: "快线", value: "98.10", color: "text-[#e80000]", width: "w-[57px]" },
              { label: "慢线", value: "94.23", color: "text-[#00e8e8]", width: "w-[67px]" },
              { label: "主力", value: "18.14", color: "text-[#e00000]", width: "w-[58px]" },
              { label: "主力趋势", value: "11.78", color: "text-[#00e800]", width: "w-[80px]" },
            ]}
          />
          <TrendPanel />
          <Readings
            items={[
              { label: "决策信号", color: "text-[#c8c8c8]", width: "w-[69px]" },
              { label: "上部信号", value: "10.00", color: "text-[#e00000]", width: "w-[79px]" },
              { label: "下部信号", value: "10.00", color: "text-[#e00000]", width: "w-[280px]" },
              { label: "短坑", value: "84.61", color: "text-[#00e0e0]", width: "w-[59px]" },
              { label: "中坑", value: "52.16", color: "text-[#0000e8]", width: "w-[57px]" },
              { label: "长坑", value: "26.86", color: "text-[#e80000]", width: "w-[60px]" },
            ]}
          />
          <SignalPanel />
          <Axis />
          <Tabs />
          <div className="absolute inset-y-0 right-px border-r border-[#700000]" />
          <div className="absolute top-0 right-[2px] h-[54px] w-[220px] bg-[#e4e4e4]" />
          <a
            href="#home"
            className="absolute top-[2px] right-[5px] flex h-[56px] w-[222px] flex-col items-center bg-white whitespace-nowrap"
          >
            <span className="text-[30px] leading-[33px] font-bold text-[#ff3300]">股票公式指标网</span>
            <span className="text-[24px] leading-[16px] font-bold text-[#ff9900]" style={{ fontFamily: '"Open Sans", sans-serif' }}>
              www.gszx.com.cn
            </span>
          </a>
        </main>
      </div>
    </div>
  );
};

export default App;
